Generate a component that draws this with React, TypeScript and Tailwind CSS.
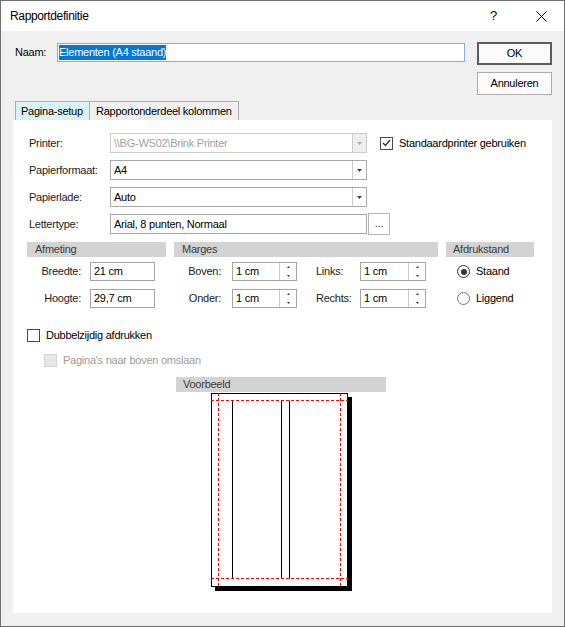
import React from "react";

const Arrow = ({ color = "#404040" }: { color?: string }) => (
  <svg width="5" height="3" viewBox="0 0 5 3">
    <path d="M0 0h5L2.5 3z" fill={color} />
  </svg>
);

const Combo = ({ value, disabled }: { value: string; disabled?: boolean }) => (
  <div
    className={`flex h-[20px] w-[257px] border bg-white ${
      disabled ? "border-[#cccccc]" : "border-[#a9a9a9]"
    }`}
  >
    <div
      className={`flex flex-1 items-center pl-[3px] ${
        disabled ? "text-[#a0a0a0]" : "text-black"
      }`}
    >
      {value}
    </div>
    <div
      className={`flex w-[14px] items-center justify-center border-l ${
        disabled ? "border-[#cccccc] bg-[#efefef]" : "border-[#cccccc] bg-white"
      }`}
    >
      <Arrow color={disabled ? "#a8a8a8" : "#404040"} />
    </div>
  </div>
);

const TextBox = ({ value, w }: { value: string; w: string }) => (
  <div className={`flex h-[19px] items-center border border-[#a5a5a5] bg-white pl-[3px] ${w}`}>
    {value}
  </div>
);

const Spin = ({ value, w }: { value: string; w: string }) => (
  <div className={`flex h-[19px] border border-[#a5a5a5] bg-white ${w}`}>
    <div className="flex flex-1 items-center pl-[3px]">{value}</div>
    <div className="flex w-[17px] flex-col border-l border-[#c8c8c8]">
      <div className="flex flex-1 items-center justify-center">
        <svg width="3" height="2" viewBox="0 0 3 2">
          <path d="M1.5 0L3 2H0z" fill="#404040" />
        </svg>
      </div>
      <div className="flex flex-1 items-center justify-center">
        <svg width="3" height="2" viewBox="0 0 3 2">
          <path d="M0 0h3L1.5 2z" fill="#404040" />
        </svg>
      </div>
    </div>
  </div>
);

const Bar = ({ label, w, pl }: { label: string; w: string; pl: string }) => (
  <div className={`h-[15px] bg-[#d3d3d3] leading-[15px] text-[#3c3c3c] ${w} ${pl}`}>
    {label}
  </div>
);

const Check = ({ checked, disabled }: { checked?: boolean; disabled?: boolean }) => (
  <div
    className={`flex h-[13px] w-[13px] items-center justify-center border ${
      disabled ? "border-[#d4d4d4] bg-[#e6e6e6]" : "border-[#4a4a4a] bg-white"
    }`}
  >
    {checked && (
      <svg width="9" height="8" viewBox="0 0 9 8">
        <path d="M1 4l2.5 2.5L8 1" fill="none" stroke="#333" strokeWidth="1.4" />
      </svg>
    )}
  </div>
);

const Radio = ({ checked }: { checked?: boolean }) => (
  <div
    className={`flex h-[13px] w-[13px] items-center justify-center rounded-full border bg-white ${
      checked ? "border-[#333]" : "border-[#777]"
    }`}
  >
    {checked && <div className="h-[6px] w-[6px] rounded-full bg-[#333]" />}
  </div>
);

export default function App() {
  return (
    <div className="h-[627px] w-[565px] overflow-hidden border border-[#707070] bg-[#f0f0f0] font-['Liberation_Sans',Arial,sans-serif] text-[11px] tracking-[-0.25px] text-black">
      {/* title bar */}
      <div className="flex h-[30px] items-center bg-white pl-[9px] text-[12px] tracking-[-0.35px]">
        <span className="flex-1">Rapportdefinitie</span>
        <span className="mr-[39px] text-[13px]">?</span>
        <svg width="11" height="11" viewBox="0 0 11 11" className="mr-[17px]">
          <path d="M0.5 0.5l10 10M10.5 0.5l-10 10" stroke="#000" strokeWidth="1" />
        </svg>
      </div>

      {/* naam + buttons */}
      <div className="flex pl-[14px] pt-[11px]">
        <div className="mt-[1px] flex h-[19px] items-center">
          <span className="w-[42px]">Naam:</span>
          <div className="flex h-[19px] w-[408px] items-center border border-[#8fa9dc] bg-white pl-[1px]">
            <span className="bg-[#0078d7] leading-[15px] text-white">Elementen (A4 staand)</span>
          </div>
        </div>
        <div className="ml-[12px] flex flex-col gap-[7px]">
          <button className="h-[23px] w-[75px] border-2 border-[#5c5c5c] bg-[#fbfbfb]">OK</button>
          <button className="h-[23px] w-[75px] border border-[#adadad] bg-[#fbfbfb]">Annuleren</button>
        </div>
      </div>

      {/* tabs */}
      <div className="mt-[6px] flex pl-[14px]">
        <div className="flex h-[19px] w-[75px] items-center border border-b-0 border-[#adadad] bg-[#dcf3f5] pl-[5px]">
          Pagina-setup
        </div>
        <div className="flex h-[19px] w-[149px] items-center border border-b-0 border-l-0 border-[#adadad] pl-[6px]">
          Rapportonderdeel kolommen
        </div>
      </div>

      {/* tab panel */}
      <div className="mx-[12px] h-[493px] bg-white pl-[14px] pt-[13px]">
        <div className="flex h-[20px] items-center pl-[2px]">
          <span className="w-[81px] text-[#222]">Printer:</span>
          <Combo value="\\BG-WS02\Brink Printer" disabled />
          <div className="ml-[13px] flex items-center">
            <Check checked />
            <span className="ml-[6px]">Standaardprinter gebruiken</span>
          </div>
        </div>
        <div className="mt-[7px] flex h-[20px] items-center pl-[2px]">
          <span className="w-[81px] text-[#222]">Papierformaat:</span>
          <Combo value="A4" />
        </div>
        <div className="mt-[7px] flex h-[20px] items-center pl-[2px]">
          <span className="w-[81px] text-[#222]">Papierlade:</span>
          <Combo value="Auto" />
        </div>
        <div className="mt-[6px] flex h-[22px] items-center pl-[2px]">
          <span className="w-[81px] text-[#222]">Lettertype:</span>
          <div className="flex h-[20px] w-[257px] items-center border border-[#a5a5a5] pl-[3px]">
            Arial, 8 punten, Normaal
          </div>
          <div className="ml-[1px] flex h-[22px] w-[22px] items-end justify-center border border-[#b5b5b5] pb-[3px] text-[#333]">
            ...
          </div>
        </div>

        {/* groups */}
        <div className="mt-[7px] flex gap-[8px]">
          <div className="w-[139px]">
            <Bar label="Afmeting" w="w-[139px]" pl="pl-[8px]" />
            <div className="mt-[5px] flex flex-col gap-[8px]">
              <div className="flex h-[19px] items-center">
                <span className="w-[55px] pr-[1px] text-right text-[#222]">Breedte:</span>
                <div className="ml-[8px]"><TextBox value="21 cm" w="w-[65px]" /></div>
              </div>
              <div className="flex h-[19px] items-center">
                <span className="w-[55px] pr-[1px] text-right text-[#222]">Hoogte:</span>
                <div className="ml-[8px]"><TextBox value="29,7 cm" w="w-[65px]" /></div>
              </div>
            </div>
          </div>

          <div className="w-[264px]">
            <Bar label="Marges" w="w-[264px]" pl="pl-[8px]" />
            <div className="mt-[5px] flex flex-col gap-[8px]">
              <div className="flex h-[19px] items-center">
                <span className="w-[48px] pr-[1px] text-right text-[#222]">Boven:</span>
                <div className="ml-[10px]"><Spin value="1 cm" w="w-[65px]" /></div>
                <span className="ml-[19px] w-[44px] text-[#222]">Links:</span>
                <Spin value="1 cm" w="w-[66px]" />
              </div>
              <div className="flex h-[19px] items-center">
                <span className="w-[48px] pr-[1px] text-right text-[#222]">Onder:</span>
                <div className="ml-[10px]"><Spin value="1 cm" w="w-[65px]" /></div>
                <span className="ml-[19px] w-[44px] text-[#222]">Rechts:</span>
                <Spin value="1 cm" w="w-[66px]" />
              </div>
            </div>
          </div>

          <div className="w-[88px]">
            <Bar label="Afdrukstand" w="w-[88px]" pl="pl-[7px]" />
            <div className="mt-[5px] flex flex-col gap-[8px] pl-[11px]">
              <div className="flex h-[19px] items-center">
                <Radio checked />
                <span className="ml-[6px]">Staand</span>
              </div>
              <div className="flex h-[19px] items-center">
                <Radio />
                <span className="ml-[6px]">Liggend</span>
              </div>
            </div>
          </div>
        </div>

        {/* options */}
        <div className="mt-[21px] flex h-[13px] items-center">
          <Check />
          <span className="ml-[6px]">Dubbelzijdig afdrukken</span>
        </div>
        <div className="mt-[12px] flex h-[13px] items-center pl-[17px]">
          <Check disabled />
          <span className="ml-[6px] text-[#9a9a9a]">Pagina's naar boven omslaan</span>
        </div>

        {/* preview */}
        <div className="ml-[149px] mt-[10px]">
          <Bar label="Voorbeeld" w="w-[210px]" pl="pl-[7px]" />
        </div>
        <svg width="141" height="198" viewBox="0 0 141 198" className="ml-[184px] mt-[1px]">
          <rect x="4" y="4" width="137" height="194" fill="#000" />
          <rect x="0.5" y="0.5" width="136" height="193" fill="#fff" stroke="#000" />
          <path d="M21.5 7.5V185.5M70.5 7.5V185.5M78.5 7.5V185.5" stroke="#000" strokeWidth="1" />
          <path
            d="M7.5 0V194M129.5 0V194M0 7.5H137M0 185.5H137"
            stroke="#ff0000"
            strokeWidth="1"
            strokeDasharray="3 2"
          />
        </svg>
      </div>
    </div>
  );
}
